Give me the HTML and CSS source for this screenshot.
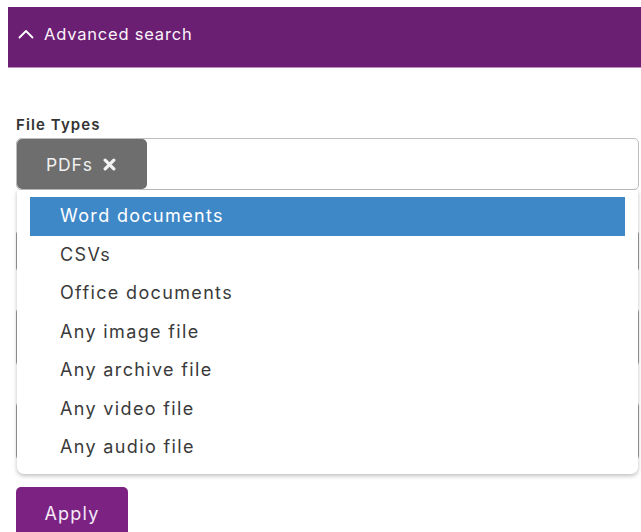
FILE: index.html
```html
<!DOCTYPE html>
<html lang="en">
<head>
<meta charset="utf-8">
<title>Advanced search</title>
<link rel="stylesheet" href="styles.css">
</head>
<body>
<div class="page">
  <button class="panel-toggle" type="button">
    <svg class="chevron" width="16" height="10" viewBox="0 0 16 10" aria-hidden="true">
      <path d="M1.5 8.5 L8 2 L14.5 8.5" fill="none" stroke="#fff" stroke-width="1.8" stroke-linecap="round" stroke-linejoin="round"/>
    </svg>
    <span>Advanced search</span>
  </button>

  <form class="search-form">
    <div class="field">
      <label class="field-label">File Types</label>
      <div class="tag-select">
        <div class="tag-box">
          <span class="tag">PDFs
            <svg class="tag-remove" width="13" height="13" viewBox="0 0 12 12" aria-hidden="true">
              <path d="M2 2 L10 10 M10 2 L2 10" stroke="#f2f2f2" stroke-width="3" stroke-linecap="round"/>
            </svg>
          </span>
        </div>
        <ul class="options">
          <li class="option is-active">Word documents</li>
          <li class="option">CSVs</li>
          <li class="option">Office documents</li>
          <li class="option">Any image file</li>
          <li class="option">Any archive file</li>
          <li class="option">Any video file</li>
          <li class="option">Any audio file</li>
        </ul>
      </div>
    </div>

    <div class="field-stack">
      <div class="input-box short"></div>
      <div class="input-box tall"></div>
      <div class="input-box tall"></div>
    </div>

    <button class="apply" type="button">Apply</button>
  </form>
</div>
</body>
</html>
```

FILE: styles.css
```css
html, body {
  margin: 0;
  padding: 0;
  background: #fff;
  overflow: hidden;
}

body {
  font-family: Inter, "Open Sans", "Liberation Sans", sans-serif;
  color: #333;
}

.page {
  padding: 7px 0 0 8px;
}

.panel-toggle {
  display: flex;
  align-items: center;
  gap: 10px;
  width: calc(100% + 8px);
  height: 61px;
  margin: 0;
  padding: 0 0 6px 10px;
  border: 0;
  border-bottom: 1px solid #b88bbd;
  background: #6b1f73;
  color: #fbf4fb;
  font-family: inherit;
  font-size: 16.5px;
  font-weight: 400;
  letter-spacing: 0.8px;
  text-align: left;
  box-sizing: border-box;
}

.chevron {
  flex: none;
  margin-top: -1px;
}

.search-form {
  padding: 0 2px 0 8px;
}

.field {
  padding-top: 48px;
}

.field-label {
  display: block;
  font-size: 15px;
  font-weight: 600;
  color: #333;
  line-height: 18px;
  letter-spacing: 1.1px;
  margin-bottom: 4px;
}

.tag-select {
  position: relative;
}

.tag-box {
  height: 52px;
  border: 1px solid #bdbdbd;
  border-radius: 5px;
  box-sizing: border-box;
}

.tag {
  display: inline-flex;
  align-items: center;
  gap: 10px;
  height: 50px;
  padding: 0 0 0 29px;
  box-sizing: border-box;
  width: 130px;
  background: #6e6e6e;
  color: #f0f0f0;
  border-radius: 5px;
  font-size: 17.5px;
  letter-spacing: 0.9px;
}

.tag-remove {
  flex: none;
}

.options {
  position: absolute;
  z-index: 2;
  top: 52px;
  left: 1px;
  right: 1px;
  margin: 0;
  padding: 7px 13px 7px 13px;
  list-style: none;
  background: #fff;
  border-radius: 0 0 7px 7px;
  box-shadow: 0 2px 4px rgba(0, 0, 0, 0.25);
}

.option {
  height: 38.5px;
  line-height: 38.5px;
  padding-left: 30px;
  font-size: 18px;
  color: #3a3a3a;
  letter-spacing: 1.35px;
  white-space: nowrap;
}

.option.is-active {
  background: #3f88c8;
  color: #fff;
}

.field-stack {
  display: flex;
  flex-direction: column;
  gap: 36px;
  padding-top: 40px;
}

.input-box {
  border: 1px solid #9a9a9a;
  border-radius: 4px;
}

.input-box.short {
  height: 40px;
}

.input-box.tall {
  height: 56px;
}

.apply {
  display: block;
  margin-top: 27px;
  width: 112px;
  height: 52px;
  padding: 0;
  border: 0;
  border-radius: 5px;
  background: #7b2283;
  color: #f6e9f7;
  font-family: inherit;
  font-size: 18px;
  letter-spacing: 1.2px;
}
```
